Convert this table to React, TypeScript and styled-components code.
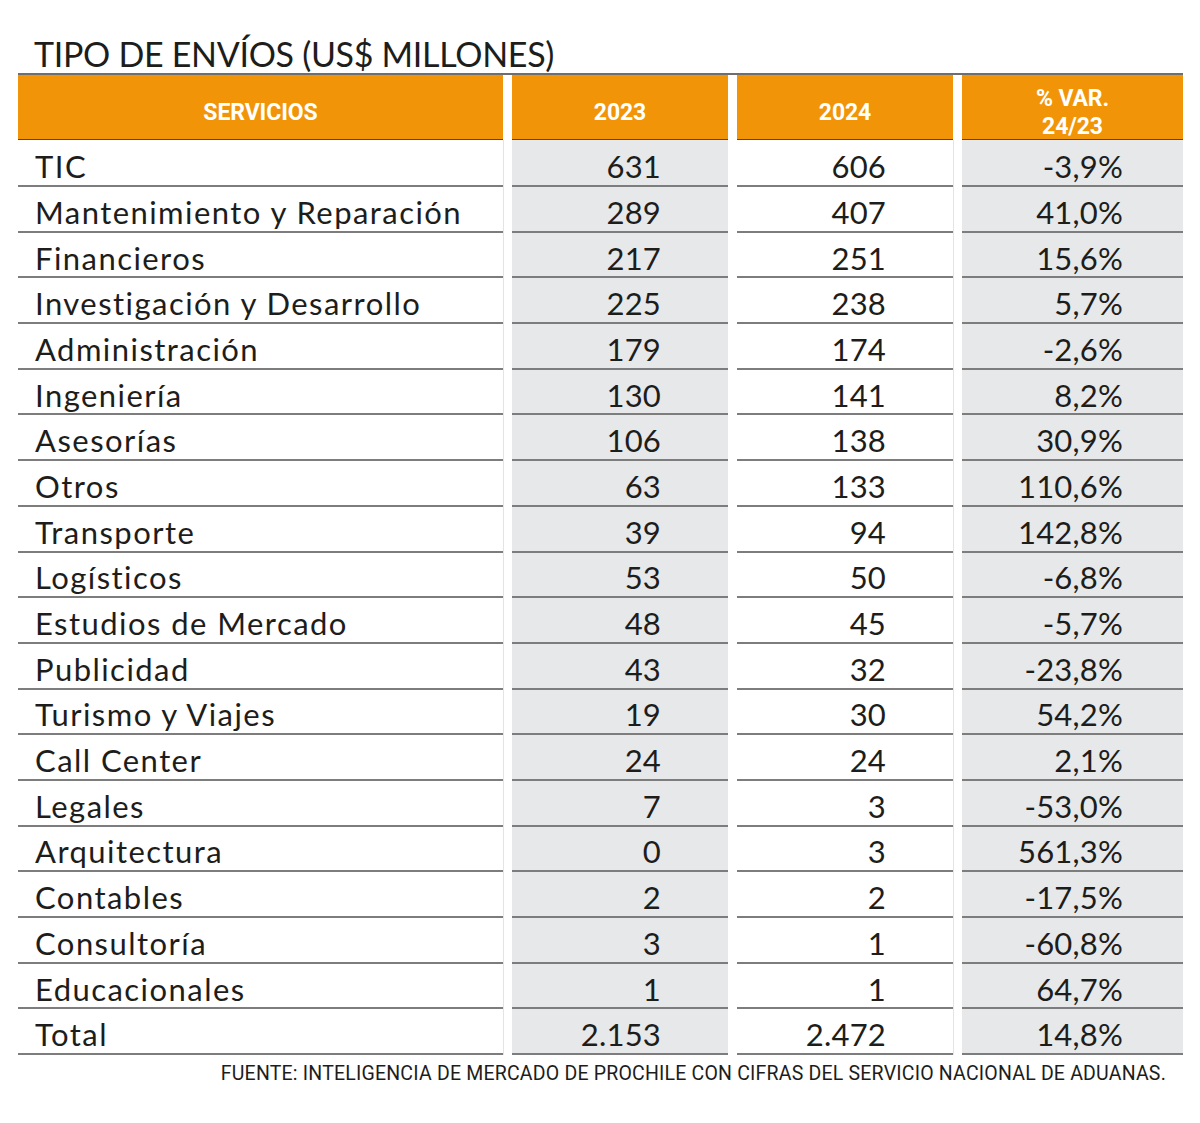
import React from 'react'
import styled, { createGlobalStyle } from 'styled-components'

const GlobalStyle = createGlobalStyle`
  body {
    margin: 0;
    background: #fff;
    font-family: Lato, 'Open Sans', sans-serif;
    color: #1d1d1b;
  }
`

const ORANGE = '#f29407'
const SHADE = '#e6e8ea'
const RULE = '#7d7d7d'

type Shade = 'white' | 'gray'

interface Row {
  name: string
  y23: string
  y24: string
  change: string
}

const ROWS: Row[] = [
  { name: 'TIC', y23: '631', y24: '606', change: '-3,9%' },
  { name: 'Mantenimiento y Reparación', y23: '289', y24: '407', change: '41,0%' },
  { name: 'Financieros', y23: '217', y24: '251', change: '15,6%' },
  { name: 'Investigación y Desarrollo', y23: '225', y24: '238', change: '5,7%' },
  { name: 'Administración', y23: '179', y24: '174', change: '-2,6%' },
  { name: 'Ingeniería', y23: '130', y24: '141', change: '8,2%' },
  { name: 'Asesorías', y23: '106', y24: '138', change: '30,9%' },
  { name: 'Otros', y23: '63', y24: '133', change: '110,6%' },
  { name: 'Transporte', y23: '39', y24: '94', change: '142,8%' },
  { name: 'Logísticos', y23: '53', y24: '50', change: '-6,8%' },
  { name: 'Estudios de Mercado', y23: '48', y24: '45', change: '-5,7%' },
  { name: 'Publicidad', y23: '43', y24: '32', change: '-23,8%' },
  { name: 'Turismo y Viajes', y23: '19', y24: '30', change: '54,2%' },
  { name: 'Call Center', y23: '24', y24: '24', change: '2,1%' },
  { name: 'Legales', y23: '7', y24: '3', change: '-53,0%' },
  { name: 'Arquitectura', y23: '0', y24: '3', change: '561,3%' },
  { name: 'Contables', y23: '2', y24: '2', change: '-17,5%' },
  { name: 'Consultoría', y23: '3', y24: '1', change: '-60,8%' },
  { name: 'Educacionales', y23: '1', y24: '1', change: '64,7%' },
  { name: 'Total', y23: '2.153', y24: '2.472', change: '14,8%' },
]

const Page = styled.div`
  width: 1200px;
  height: 1123px;
  padding: 35px 17px 0 18px;
  box-sizing: border-box;
`

const Title = styled.h1`
  margin: 0 0 0 16px;
  font-size: 34px;
  font-weight: 400;
  line-height: 38px;
  letter-spacing: -0.3px;
  color: #1d1d1b;
`

const Table = styled.div`
  display: grid;
  grid-template-columns: 485px 216px 216px 221px;
  column-gap: 9px;
  border-top: 2px solid #6e6e6e;
`

const HeadCell = styled.div`
  height: 65px;
  background: ${ORANGE};
  border-bottom: 1px solid #4a4a4a;
  box-sizing: border-box;
  display: flex;
  align-items: center;
  justify-content: center;
  text-align: center;
  color: #fff;
  font-family: Roboto, sans-serif;
  font-weight: 700;
  font-size: 23px;
  line-height: 28px;
  letter-spacing: -0.1px;
  padding-top: 12px;
`

const Cell = styled.div<{ $shade: Shade; $first?: boolean }>`
  height: ${({ $first }) => ($first ? '47px' : '45.7px')};
  box-sizing: border-box;
  background: ${({ $shade }) => ($shade === 'gray' ? SHADE : '#fff')};
  border-bottom: 2px solid ${RULE};
  display: flex;
  align-items: center;
  font-size: 31px;
  padding-top: 6px;
  box-shadow: ${({ $shade }) => ($shade === 'white' ? '1px 0 0 #e4e4e4' : 'none')};
`

const NameCell = styled(Cell)`
  padding-left: 17px;
  letter-spacing: 1.45px;
`

const NumCell = styled(Cell)<{ $pad: number }>`
  justify-content: flex-end;
  padding-right: ${({ $pad }) => $pad}px;
  letter-spacing: 0.2px;
`

const Source = styled.p`
  margin: 7px 0 0;
  padding-right: 17px;
  text-align: right;
  font-family: Roboto, sans-serif;
  font-size: 19.5px;
  line-height: 23px;
  letter-spacing: 0.2px;
  color: #1d1d1b;
`

const App: React.FC = () => (
  <Page>
    <GlobalStyle />
    <Title>TIPO DE ENVÍOS (US$ MILLONES)</Title>
    <Table>
      <HeadCell>SERVICIOS</HeadCell>
      <HeadCell>2023</HeadCell>
      <HeadCell>2024</HeadCell>
      <HeadCell>
        % VAR.
        <br />
        24/23
      </HeadCell>
      {ROWS.map((row, i) => (
        <React.Fragment key={row.name}>
          <NameCell $shade="white" $first={i === 0}>
            {row.name}
          </NameCell>
          <NumCell $shade="gray" $first={i === 0} $pad={67}>
            {row.y23}
          </NumCell>
          <NumCell $shade="white" $first={i === 0} $pad={67}>
            {row.y24}
          </NumCell>
          <NumCell $shade="gray" $first={i === 0} $pad={60}>
            {row.change}
          </NumCell>
        </React.Fragment>
      ))}
    </Table>
    <Source>
      FUENTE: INTELIGENCIA DE MERCADO DE PROCHILE CON CIFRAS DEL SERVICIO NACIONAL DE ADUANAS.
    </Source>
  </Page>
)

export default App
